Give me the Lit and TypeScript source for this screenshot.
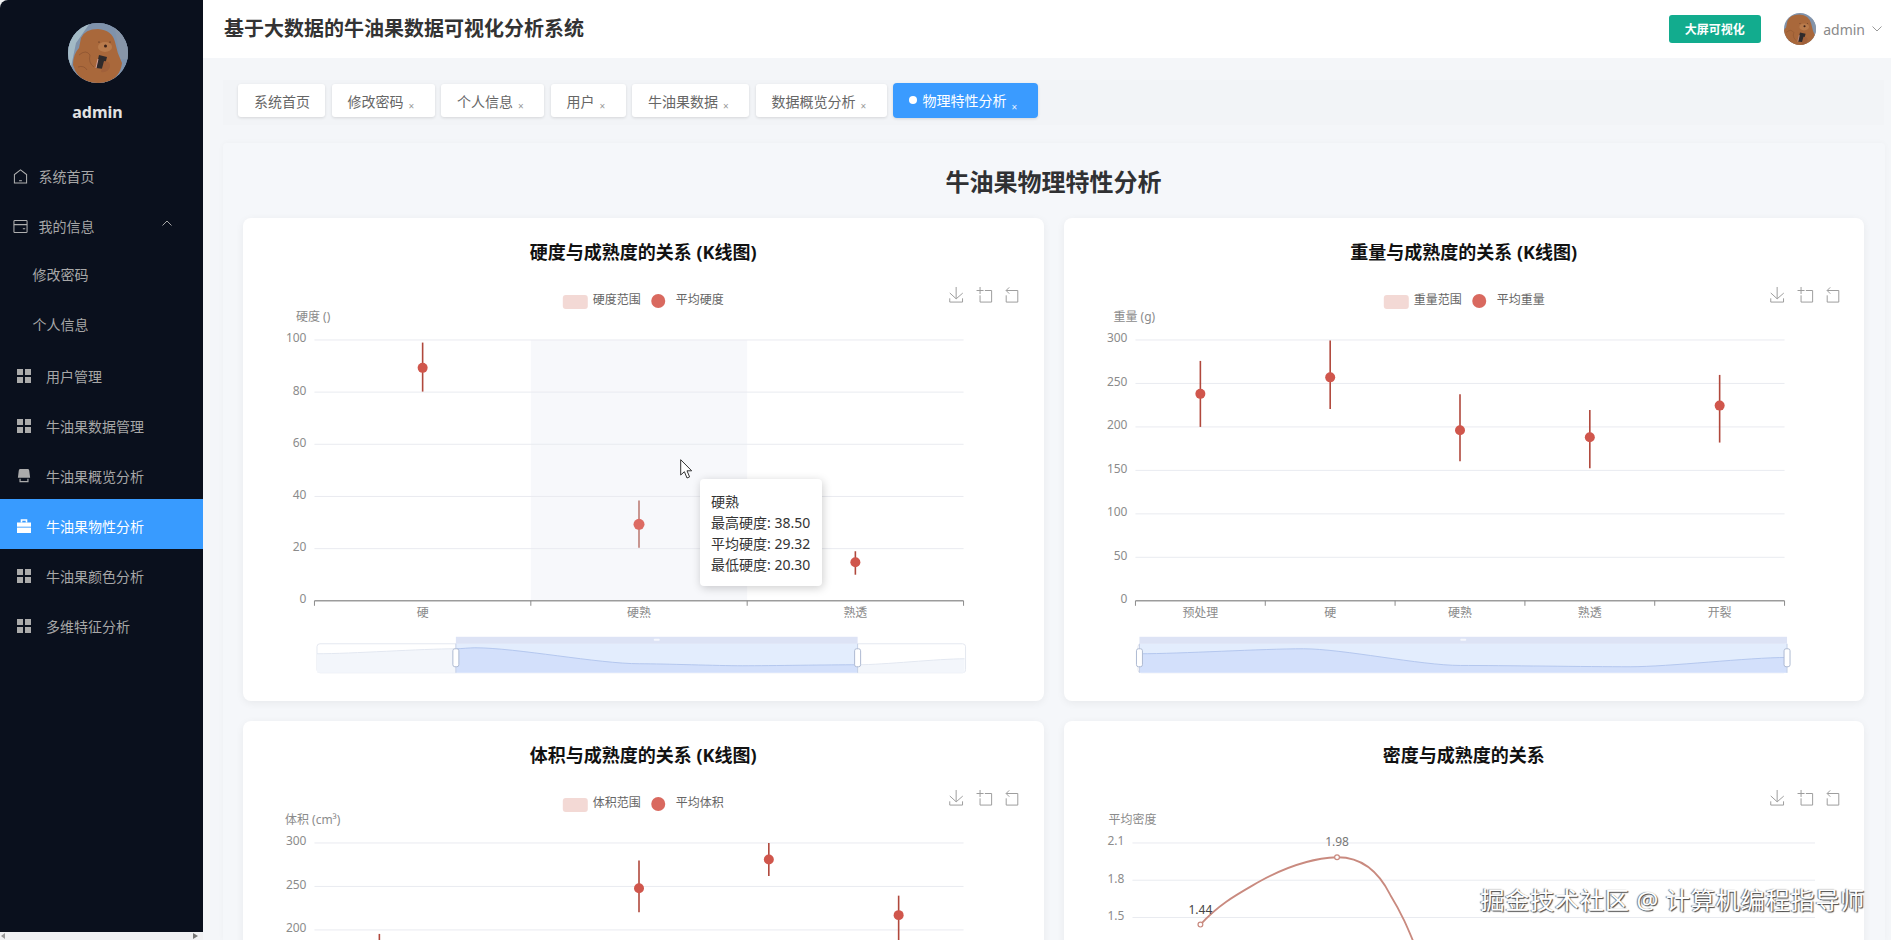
import { LitElement, html, svg, css } from 'lit';
import { customElement, property } from 'lit/decorators.js';

const FONT = css`"Noto Sans", "Noto Sans CJK SC", sans-serif`;

// plot area, in chart coordinates (same for all four charts)
const PLOT_TOP = 62;
const PLOT_BOTTOM = 323;

interface KPoint {
  cat: string;
  high: number;
  avg: number;
  low: number;
}

interface SliderCfg {
  from: number;
  to: number;
  line: [number, number][];
}

interface TooltipCfg {
  title: string;
  rows: string[];
}

function bear(cls: string, box = '0 0 60 60') {
  return html`<svg class=${cls} viewBox=${box}>
    <rect x="0" y="0" width="60" height="60" fill="#7f92ab" />
    <path d="M0 0H22L8 20L3 44L0 44Z" fill="#a3bac6" />
    <path d="M46 0H60V36H52Z" fill="#8795a8" />
    <path
      d="M13 15Q17 6 30 6Q44 7 47 19Q49 30 54 40Q52 58 30 62Q10 60 5 42Q5 31 11 25Z"
      fill="#a9683b"
    />
    <ellipse cx="37" cy="24" rx="7" ry="5" fill="#b97b4c" />
    <circle cx="37.5" cy="23" r="1.5" fill="#3a2018" />
    <circle cx="31" cy="19" r=".6" fill="#3a2018" />
    <circle cx="42" cy="19" r=".6" fill="#3a2018" />
    <path d="M11 32Q18 26 22 32Q20 40 26 44M10 44Q16 42 19 47" fill="none" stroke="#8a5230" stroke-width=".7" />
    <path d="M31 32L39 34L36 46L28 45Z" fill="#2f2a2b" />
    <path d="M30 36L28 45" stroke="#d9a39a" stroke-width="1" />
    <path d="M36 38Q43 38 42 44Q40 50 33 49Z" fill="#a0603a" />
  </svg>`;
}

const gridIcon = html`<svg class="mi" viewBox="0 0 14 14" fill="#ababab">
  <rect x="0" y="0" width="6" height="6" />
  <rect x="8" y="0" width="6" height="6" />
  <rect x="0" y="8" width="6" height="6" />
  <rect x="8" y="8" width="6" height="6" />
</svg>`;

const homeIcon = html`<svg class="mi" viewBox="0 0 16 16" fill="none" stroke="#b0b0b0" stroke-width="1.1">
  <path d="M8 1L14.5 6V15H1.5V6Z" />
  <path d="M6.5 12.5H9.5" />
</svg>`;

const cardIcon = html`<svg class="mi" viewBox="0 0 16 16" fill="none" stroke="#b0b0b0" stroke-width="1.1">
  <rect x="1" y="1.5" width="14" height="13" rx="1" />
  <path d="M1 6H15M10.5 10.5H13" />
</svg>`;

const shopIcon = html`<svg class="mi" viewBox="0 0 14 16">
  <path d="M2.5 0H11.5Q13 0 13 2L14 10H0L1 2Q1 0 2.5 0Z" fill="#ababab" />
  <path d="M2.5 11V14.5H11.5V11" fill="none" stroke="#ababab" stroke-width="1.4" />
</svg>`;

const caseIcon = html`<svg class="mi" viewBox="0 0 14 14">
  <path d="M4.5 3.5V1H9.5V3.5" fill="none" stroke="#fff" stroke-width="1.6" />
  <rect x="0" y="3.5" width="14" height="4.2" fill="#fff" />
  <rect x="0" y="8.6" width="14" height="5.4" fill="#fff" />
</svg>`;

@customElement('k-chart')
export class KChart extends LitElement {
  static override styles = css`
    :host {
      display: block;
    }
    svg {
      display: block;
      width: 100%;
      height: 423px;
      font-family: ${FONT};
    }
    .tick {
      font-size: 12px;
      fill: #8b8b8b;
    }
    .legend {
      font-size: 12px;
      fill: #666;
    }
    .tool {
      fill: none;
      stroke: #9c9c9c;
      stroke-width: 3.8;
    }
    .tooltip {
      position: absolute;
      left: 457px;
      top: 201px;
      width: 122px;
      height: 107px;
      box-sizing: border-box;
      padding: 12px 11px;
      background: #fff;
      border-radius: 4px;
      box-shadow: 1px 2px 10px rgba(0, 0, 0, 0.2);
      font: 14px/21px ${FONT};
      color: #333;
      white-space: nowrap;
    }
    .cursor {
      position: absolute;
      left: 437px;
      top: 181px;
      width: 13px;
      height: 20px;
    }
    .wrap {
      position: relative;
    }
  `;

  @property({ type: String }) yName = '';
  @property({ type: String }) legendName = '';
  @property({ type: String }) avgName = '';
  @property({ type: Number }) yMax = 100;
  @property({ type: Number }) yStep = 20;
  @property({ type: Number }) digits = 0;
  @property({ type: Number }) x0 = 71.5;
  @property({ type: Number }) x1 = 721;
  @property({ type: Number }) hover = -1;
  @property({ type: Number }) yNameX = 53;
  @property({ attribute: false }) points: KPoint[] = [];
  @property({ attribute: false }) categories: string[] = [];
  @property({ attribute: false }) slider?: SliderCfg;
  @property({ attribute: false }) tooltip?: TooltipCfg;
  @property({ attribute: false }) overlay?: unknown;

  private _y(v: number) {
    return PLOT_BOTTOM - (v / this.yMax) * (PLOT_BOTTOM - PLOT_TOP);
  }

  private _axis() {
    const rows = [];
    for (let v = 0; v <= this.yMax + 0.0001; v += this.yStep) {
      const y = this._y(v);
      if (v > 0) {
        rows.push(svg`<line x1=${this.x0} x2=${this.x1} y1=${y} y2=${y} stroke="#e9ebf0" />`);
      }
      rows.push(svg`<text class="tick" x=${this.x0 - 8} y=${y - 2} text-anchor="end" dominant-baseline="central">${v.toFixed(this.digits)}</text>`);
    }
    const cats = this.categories;
    const band = (this.x1 - this.x0) / cats.length;
    rows.push(svg`<line x1=${this.x0} x2=${this.x1} y1=${PLOT_BOTTOM} y2=${PLOT_BOTTOM} stroke="#9c9c9c" stroke-width="1.4" />`);
    for (let i = 0; i <= cats.length; i++) {
      const x = this.x0 + i * band;
      rows.push(svg`<line x1=${x} x2=${x} y1=${PLOT_BOTTOM} y2=${PLOT_BOTTOM + 5} stroke="#8b8b8b" />`);
    }
    cats.forEach((c, i) => {
      rows.push(svg`<text class="tick" x=${this.x0 + (i + 0.5) * band} y=${PLOT_BOTTOM + 12} text-anchor="middle" dominant-baseline="central">${c}</text>`);
    });
    return rows;
  }

  private _series() {
    const band = (this.x1 - this.x0) / this.categories.length;
    return this.points.map((p, i) => {
      const x = this.x0 + (i + 0.5) * band;
      const active = i === this.hover;
      return svg`
        <line x1=${x} x2=${x} y1=${this._y(p.high)} y2=${this._y(p.low)}
          stroke=${active ? '#bc7d76' : '#b0483c'} stroke-width="1.6" />
        <circle cx=${x} cy=${this._y(p.avg)} r=${active ? 5.5 : 5} fill=${active ? '#dd6b63' : '#d0564c'} />
      `;
    });
  }

  private _legend() {
    if (!this.legendName) return '';
    return svg`
      <rect x="320" y="17" width="25" height="14" rx="3" fill="#f3d9d5" />
      <text class="legend" x="350" y="22" dominant-baseline="central">${this.legendName}</text>
      <circle cx="415.5" cy="23" r="7" fill="#d9695f" />
      <text class="legend" x="433" y="22" dominant-baseline="central">${this.avgName}</text>
    `;
  }

  private _toolbox() {
    return svg`
      <g transform="translate(706 9) scale(.26)">
        <path class="tool" d="M4.7,22.9L29.3,45.5L54.7,23.4M4.6,43.6L4.6,58L53.8,58L53.8,43.6M29.2,45.1L29.2,0" />
      </g>
      <g transform="translate(734 9) scale(.26)">
        <path class="tool" d="M0,13.5h26.9 M13.5,26.9V0 M32.1,13.5H58V58H13.5 V32.1" />
      </g>
      <g transform="translate(761 9) scale(.26)">
        <path class="tool" d="M22,1.4L9.9,13.5l12.3,12.3 M10.3,13.5H54.9v44.6 H10.3v-26" />
      </g>
    `;
  }

  private _slider() {
    const s = this.slider;
    if (!s) return '';
    const top = 366;
    const bottom = 395;
    let d = `M${s.line[0][0]} ${s.line[0][1]}`;
    for (let i = 1; i < s.line.length; i++) {
      const [ax, ay] = s.line[i - 1];
      const [bx, by] = s.line[i];
      const dx = (bx - ax) * 0.25;
      d += ` C${ax + dx} ${ay} ${bx - dx} ${by} ${bx} ${by}`;
    }
    const last = s.line[s.line.length - 1];
    const area = `${d} L${last[0]} ${bottom} L${s.line[0][0]} ${bottom} Z`;
    const w = s.to - s.from;
    return svg`
      <defs>
        <clipPath id="sel"><rect x=${s.from} y=${top} width=${w} height=${bottom - top} /></clipPath>
      </defs>
      <rect x="74" y=${top} width="649" height=${bottom - top} rx="3" fill="#fff" stroke="#e4e8f0" />
      <path d=${area} fill="#f3f6fb" />
      <path d=${d} fill="none" stroke="#e3e8f1" />
      <rect x=${s.from} y="359" width=${w} height="7" fill="#dde3f5" />
      <rect x=${s.from + w / 2 - 3} y="361" width="6" height="2" rx="1" fill="#f6f8fd" />
      <rect x=${s.from} y=${top} width=${w} height=${bottom - top} fill="#e3edfd" />
      <g clip-path="url(#sel)">
        <path d=${area} fill="#d3e0fb" />
        <path d=${d} fill="none" stroke="#b4c7ee" />
      </g>
      ${[s.from, s.to].map(
        (x) => svg`
          <line x1=${x} x2=${x} y1=${top} y2=${bottom} stroke="#c5d0e6" />
          <rect x=${x - 3} y="371" width="6" height="18" rx="2" fill="#fff" stroke="#aebad2" />
        `,
      )}
    `;
  }

  override render() {
    const band = (this.x1 - this.x0) / Math.max(this.categories.length, 1);
    return html`
      <div class="wrap">
        <svg viewBox="0 0 801 423" preserveAspectRatio="xMinYMin meet">
          ${this.hover >= 0
            ? svg`<rect x=${this.x0 + this.hover * band} y=${PLOT_TOP} width=${band} height=${PLOT_BOTTOM - PLOT_TOP} fill="#f7f8fb" />`
            : ''}
          ${this._legend()} ${this._toolbox()}
          <text class="tick" x=${this.yNameX} y="39" dominant-baseline="central">${this.yName}</text>
          ${this._axis()} ${this._series()} ${this.overlay ?? ''} ${this._slider()}
        </svg>
        ${this.tooltip
          ? html`<div class="tooltip">
                <div>${this.tooltip.title}</div>
                ${this.tooltip.rows.map((r) => html`<div>${r}</div>`)}
              </div>
              <svg class="cursor" viewBox="0 0 13 20">
                <path
                  d="M.7.7V16L4.4 12.7L7 19L9.6 17.9L7 11.8H11.7Z"
                  fill="#fff"
                  stroke="#333"
                  stroke-width="1"
                />
              </svg>`
          : ''}
      </div>
    `;
  }
}

const menu = [
  { label: '系统首页', icon: homeIcon, kind: 'top' },
  { label: '我的信息', icon: cardIcon, kind: 'top', open: true },
  { label: '修改密码', kind: 'sub' },
  { label: '个人信息', kind: 'sub' },
  { label: '用户管理', icon: gridIcon, kind: 'item' },
  { label: '牛油果数据管理', icon: gridIcon, kind: 'item' },
  { label: '牛油果概览分析', icon: shopIcon, kind: 'item' },
  { label: '牛油果物性分析', icon: caseIcon, kind: 'item', active: true },
  { label: '牛油果颜色分析', icon: gridIcon, kind: 'item' },
  { label: '多维特征分析', icon: gridIcon, kind: 'item' },
];

const tabs = ['修改密码', '个人信息', '用户', '牛油果数据', '数据概览分析'];
const stages = ['预处理', '硬', '硬熟', '熟透', '开裂'];

const hardness: KPoint[] = [
  { cat: '硬', high: 99, avg: 89.3, low: 80.2 },
  { cat: '硬熟', high: 38.5, avg: 29.32, low: 20.3 },
  { cat: '熟透', high: 19, avg: 14.8, low: 10 },
];

const weight: KPoint[] = [
  { cat: '预处理', high: 275.9, avg: 238, low: 200 },
  { cat: '硬', high: 299.4, avg: 257, low: 220.7 },
  { cat: '硬熟', high: 237.6, avg: 196.2, low: 160.6 },
  { cat: '熟透', high: 219.5, avg: 188, low: 152.5 },
  { cat: '开裂', high: 259.8, avg: 224.5, low: 182 },
];

const volume: KPoint[] = [
  { cat: '预处理', high: 195.4, avg: 170, low: 150 },
  { cat: '硬', high: 180, avg: 150, low: 120 },
  { cat: '硬熟', high: 279.7, avg: 248, low: 220.3 },
  { cat: '熟透', high: 300, avg: 281, low: 262 },
  { cat: '开裂', high: 239.4, avg: 217, low: 180 },
];

const densityLine = svg`
  <path
    d="M136.5 143.7C156 122 176 112 196.5 100C226 84 252 77 273.2 76.3C298 76 315 91 326.5 114C337 131 343 144 357 179C365 200 372 260 380 323"
    fill="none"
    stroke="#c98a7f"
    stroke-width="1.8"
  />
  <circle cx="136.5" cy="143.7" r="2.4" fill="#fff" stroke="#c98a7f" stroke-width="1.2" />
  <circle cx="273.2" cy="76.3" r="2.4" fill="#fff" stroke="#c98a7f" stroke-width="1.2" />
  <text x="136.5" y="129" text-anchor="middle" dominant-baseline="central" font-size="12" fill="#444">1.44</text>
  <text x="273.2" y="61" text-anchor="middle" dominant-baseline="central" font-size="12" fill="#777">1.98</text>
`;

@customElement('app-root')
export class AppRoot extends LitElement {
  static override styles = css`
    :host {
      display: flex;
      position: relative;
      width: 100%;
      height: 100vh;
      overflow: hidden;
      background: #f4f6f9;
      font-family: ${FONT};
    }
    .side {
      flex: 0 0 203px;
      display: flex;
      flex-direction: column;
      background: #f0f1f3;
    }
    .side-body {
      flex: 1;
      background: #0a101d;
      border-top-left-radius: 8px;
      padding-right: 8px;
    }
    .side-foot {
      height: 8px;
      display: flex;
      justify-content: space-between;
      align-items: center;
      padding: 0 5px 0 1px;
    }
    .side-foot i {
      width: 0;
      height: 0;
      border-top: 3px solid transparent;
      border-bottom: 3px solid transparent;
    }
    .side-foot i:first-child {
      border-right: 4px solid #999;
    }
    .side-foot i:last-child {
      border-left: 5px solid #777;
    }
    .user {
      display: flex;
      flex-direction: column;
      align-items: center;
      padding-top: 23px;
      height: 126px;
      box-sizing: content-box;
    }
    .avatar {
      width: 60px;
      height: 60px;
      border-radius: 50%;
      box-shadow: inset 0 0 0 2px #8ea3bd;
    }
    .user-name {
      margin-top: 17px;
      font-size: 16px;
      line-height: 24px;
      font-weight: 700;
      color: #e3e3e3;
    }
    .menu {
      margin-right: -8px;
    }
    .m {
      display: flex;
      align-items: center;
      height: 50px;
      box-sizing: border-box;
      font-size: 14px;
      color: #a7a7a7;
    }
    .m.top {
      padding: 4px 0 0 13px;
      gap: 10.5px;
    }
    .m.top .mi {
      width: 15px;
      height: 15px;
    }
    .m.sub {
      padding-left: 32.5px;
    }
    .m.item {
      padding: 4px 0 0 17px;
      gap: 15px;
    }
    .m.item .mi {
      width: 14px;
      height: 14px;
    }
    .m.active {
      background: #389bff;
      color: #fff;
    }
    .chev {
      margin-left: auto;
      margin-right: 31px;
      width: 10px;
      height: 6px;
      margin-top: -6px;
    }
    .main {
      flex: 1;
      min-width: 0;
      display: flex;
      flex-direction: column;
    }
    .head {
      flex: 0 0 58px;
      display: flex;
      align-items: center;
      padding-left: 21px;
      background: #fff;
    }
    .head h1 {
      margin: 0;
      font-size: 20px;
      line-height: 28px;
      font-weight: 700;
      color: #333;
    }
    .big-btn {
      margin-left: auto;
      width: 92px;
      height: 28px;
      border-radius: 3px;
      background: #12ac8e;
      color: #fff;
      font-size: 12px;
      font-weight: 700;
      display: flex;
      align-items: center;
      justify-content: center;
    }
    .head-avatar {
      margin-left: 23px;
      width: 32px;
      height: 32px;
      border-radius: 50%;
    }
    .head-name {
      margin-left: 7.5px;
      font-size: 14px;
      color: #8a8a8a;
    }
    .head-chev {
      margin: 0 9px 0 7px;
      width: 10px;
      height: 6px;
    }
    .tabs {
      flex: 0 0 45px;
      box-sizing: border-box;
      margin: 22px 7px 0 20px;
      padding: 3px 0 0 15px;
      background: #f2f4f7;
      display: flex;
      align-items: flex-start;
      gap: 6.5px;
    }
    .tab {
      display: flex;
      align-items: center;
      height: 33px;
      margin-top: 1px;
      padding: 0 20px 0 16px;
      box-sizing: border-box;
      background: #fff;
      border-radius: 3px;
      box-shadow: 0 1px 3px rgba(0, 0, 0, 0.12);
      font-size: 14px;
      color: #666;
      white-space: nowrap;
    }
    .tab.home {
      padding-right: 15px;
    }
    .tab.on {
      height: 34.5px;
      margin-top: 0;
      background: #3a9bff;
      color: #fff;
      border-radius: 4px;
    }
    .dot {
      width: 8px;
      height: 8px;
      margin-right: 5.5px;
      border-radius: 50%;
      background: #fff;
    }
    .x {
      align-self: flex-end;
      width: 6px;
      margin: 0 0 6px 5px;
      font-size: 10px;
      line-height: 10px;
      color: #999;
    }
    .on .x {
      color: #e6f1ff;
    }
    .panel {
      flex: 1;
      min-height: 0;
      overflow: hidden;
      margin: 18px 6px 0 20px;
      padding: 23px 21px 0 20px;
      background: #f5f7fa;
      border-radius: 4px 4px 0 0;
      box-shadow: 0 0 6px rgba(0, 0, 0, 0.03);
    }
    .panel h2 {
      margin: 0 0 20px;
      text-align: center;
      font-size: 24px;
      line-height: 32px;
      font-weight: 700;
      color: #303133;
    }
    .grid {
      display: grid;
      grid-template-columns: 1fr 1fr;
      gap: 20px;
    }
    .card {
      height: 483px;
      background: #fff;
      border-radius: 8px;
      box-shadow: 0 2px 8px rgba(0, 0, 0, 0.06);
    }
    .card h3 {
      margin: 0;
      height: 60px;
      box-sizing: border-box;
      padding-top: 20px;
      text-align: center;
      font-size: 18px;
      line-height: 28px;
      font-weight: 700;
      color: #111;
    }
    .mark {
      position: absolute;
      right: 26px;
      top: 883px;
      font-size: 24.3px;
      line-height: 34px;
      letter-spacing: 0.6px;
      color: #fff;
      white-space: nowrap;
      text-shadow: 1px 1px 1px #444, -1px 0 1px #777;
    }
  `;

  private _menu() {
    return menu.map(
      (m) => html`
        <div class="m ${m.kind} ${m.active ? 'active' : ''}">
          ${m.icon ?? ''}<span>${m.label}</span>
          ${m.open
            ? html`<svg class="chev" viewBox="0 0 10 6" fill="none" stroke="#a7a7a7">
                <path d="M.5 5.5L5 1L9.5 5.5" />
              </svg>`
            : ''}
        </div>
      `,
    );
  }

  override render() {
    return html`
      <aside class="side">
        <div class="side-body">
          <div class="user">
            ${bear('avatar')}
            <div class="user-name">admin</div>
          </div>
          <nav class="menu">${this._menu()}</nav>
        </div>
        <div class="side-foot"><i></i><i></i></div>
      </aside>
      <div class="main">
        <header class="head">
          <h1>基于大数据的牛油果数据可视化分析系统</h1>
          <div class="big-btn">大屏可视化</div>
          ${bear('head-avatar', '8 4 46 46')}
          <span class="head-name">admin</span>
          <svg class="head-chev" viewBox="0 0 10 6" fill="none" stroke="#999">
            <path d="M.5 .5L5 5L9.5 .5" />
          </svg>
        </header>
        <div class="tabs">
          <div class="tab home">系统首页</div>
          ${tabs.map((t) => html`<div class="tab">${t}<span class="x">×</span></div>`)}
          <div class="tab on"><span class="dot"></span>物理特性分析<span class="x">×</span></div>
        </div>
        <section class="panel">
          <h2>牛油果物理特性分析</h2>
          <div class="grid">
            <div class="card">
              <h3>硬度与成熟度的关系 (K线图)</h3>
              <k-chart
                yName="硬度 ()"
                legendName="硬度范围"
                avgName="平均硬度"
                .yMax=${100}
                .yStep=${20}
                .hover=${1}
                .points=${hardness}
                .categories=${hardness.map((p) => p.cat)}
                .slider=${{
                  from: 213,
                  to: 615,
                  line: [[74, 376], [213, 371], [232, 370], [397, 386], [500, 388], [615, 387], [722, 381]],
                }}
                .tooltip=${{
                  title: '硬熟',
                  rows: ['最高硬度: 38.50', '平均硬度: 29.32', '最低硬度: 20.30'],
                }}
              ></k-chart>
            </div>
            <div class="card">
              <h3>重量与成熟度的关系 (K线图)</h3>
              <k-chart
                yName="重量 (g)"
                legendName="重量范围"
                avgName="平均重量"
                .yNameX=${49.5}
                .yMax=${300}
                .yStep=${50}
                .points=${weight}
                .categories=${stages}
                .slider=${{
                  from: 75.5,
                  to: 723.5,
                  line: [[75.5, 376], [239.5, 371], [396.5, 387.7], [566.5, 389], [723.5, 379.7]],
                }}
              ></k-chart>
            </div>
            <div class="card">
              <h3>体积与成熟度的关系 (K线图)</h3>
              <k-chart
                yName="体积 (cm³)"
                legendName="体积范围"
                avgName="平均体积"
                .yNameX=${42}
                .yMax=${300}
                .yStep=${50}
                .points=${volume}
                .categories=${stages}
              ></k-chart>
            </div>
            <div class="card">
              <h3>密度与成熟度的关系</h3>
              <k-chart
                yName="平均密度"
                .yNameX=${44.5}
                .yMax=${2.1}
                .yStep=${0.3}
                .digits=${1}
                .x0=${68.5}
                .x1=${751.5}
                .categories=${stages}
                .overlay=${densityLine}
              ></k-chart>
            </div>
          </div>
        </section>
      </div>
      <div class="mark">掘金技术社区 @ 计算机编程指导师</div>
    `;
  }
}

declare global {
  interface HTMLElementTagNameMap {
    'app-root': AppRoot;
    'k-chart': KChart;
  }
}
